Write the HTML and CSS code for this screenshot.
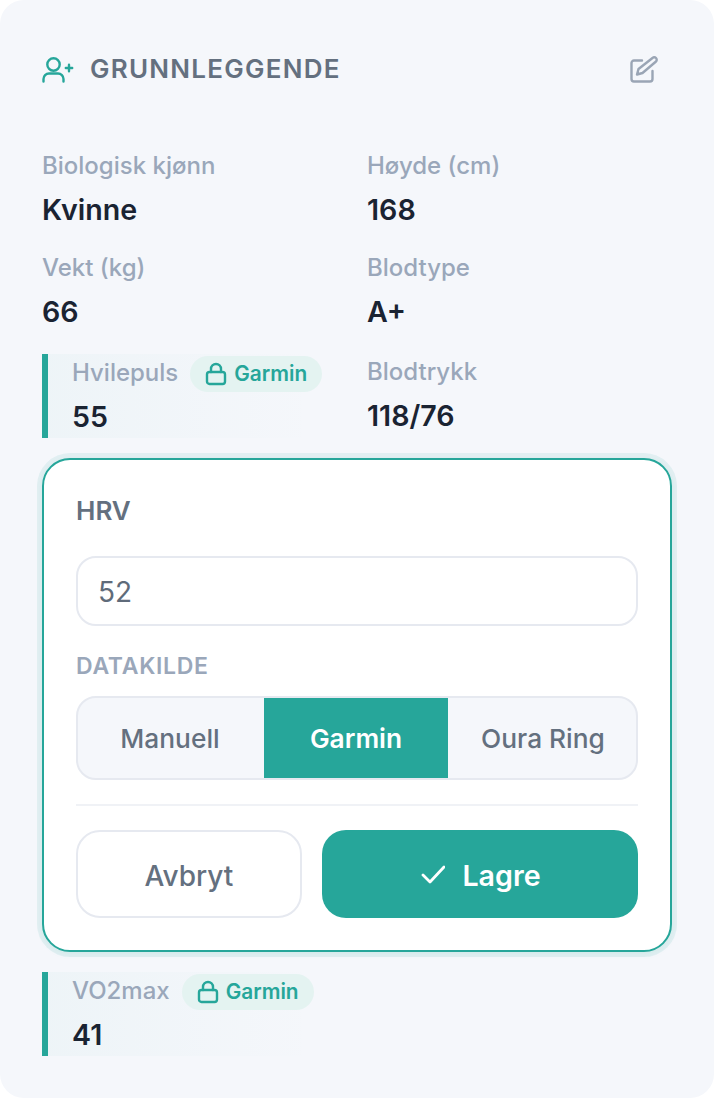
FILE: index.html
```html
<!DOCTYPE html>
<html lang="no">
<head>
<meta charset="utf-8">
<title>Grunnleggende</title>
<link rel="stylesheet" href="styles.css">
</head>
<body>
<div class="card">
  <div class="card-head">
    <div class="title">
      <svg class="title-icon" viewBox="0 0 32 28" fill="none" stroke="#26a69a" stroke-width="2.4" stroke-linecap="round" stroke-linejoin="round">
        <circle cx="11.500" cy="9.500" r="6.200"/>
        <path d="M1.500 26.500v-2.500a5.500 5.500 0 0 1 5.500-5.500h9a5.500 5.500 0 0 1 5.500 5.500v2.500"/>
        <path d="M27 9.800v6.400M23.800 13h6.400"/>
      </svg>
      <span class="title-text">GRUNNLEGGENDE</span>
    </div>
    <svg class="edit-icon" viewBox="0 0 28 28" fill="none" stroke="#9aa5b5" stroke-width="2.4" stroke-linecap="round" stroke-linejoin="round">
      <path d="M12 5.500H4A2.500 2.500 0 0 0 1.500 8v16A2.500 2.500 0 0 0 4 26.500h16a2.500 2.500 0 0 0 2.500-2.500v-8"/>
      <path d="M22.500 3a2.400 2.400 0 0 1 3.500 3.500L12.500 18 7 19.500l1.500-5.500z"/>
    </svg>
  </div>

  <div class="fields">
    <div class="field">
      <div class="label">Biologisk kjønn</div>
      <div class="value">Kvinne</div>
    </div>
    <div class="field">
      <div class="label">Høyde (cm)</div>
      <div class="value">168</div>
    </div>
    <div class="field row-two">
      <div class="label">Vekt (kg)</div>
      <div class="value">66</div>
    </div>
    <div class="field row-two">
      <div class="label">Blodtype</div>
      <div class="value">A+</div>
    </div>
    <div class="field synced">
      <div class="label">Hvilepuls
        <span class="badge">
          <svg viewBox="0 0 22 24" fill="none" stroke="#26a69a" stroke-width="2.4" stroke-linecap="round" stroke-linejoin="round"><rect x="2" y="10" width="18" height="12" rx="2.500"/><path d="M6 10V7a5 5 0 0 1 10 0v3"/></svg>
          Garmin
        </span>
      </div>
      <div class="value">55</div>
    </div>
    <div class="field">
      <div class="label">Blodtrykk</div>
      <div class="value">118/76</div>
    </div>

    <div class="editor">
      <div class="editor-label">HRV</div>
      <input class="editor-input" type="text" value="52">
      <div class="source-label">DATAKILDE</div>
      <div class="segments">
        <div class="segment seg-left">Manuell</div>
        <div class="segment active">Garmin</div>
        <div class="segment seg-right">Oura Ring</div>
      </div>
      <div class="actions">
        <button class="btn btn-cancel">Avbryt</button>
        <button class="btn btn-save">
          <svg viewBox="0 0 24 24" fill="none" stroke="#fff" stroke-width="2.800" stroke-linecap="round" stroke-linejoin="round"><path d="M2 13l7 7L23 5"/></svg>
          <span class="save-text">Lagre</span>
        </button>
      </div>
    </div>

    <div class="field synced">
      <div class="label">VO2max
        <span class="badge">
          <svg viewBox="0 0 22 24" fill="none" stroke="#26a69a" stroke-width="2.4" stroke-linecap="round" stroke-linejoin="round"><rect x="2" y="10" width="18" height="12" rx="2.500"/><path d="M6 10V7a5 5 0 0 1 10 0v3"/></svg>
          Garmin
        </span>
      </div>
      <div class="value">41</div>
    </div>
  </div>
</div>
</body>
</html>
```

FILE: styles.css
```css
html, body {
  margin: 0;
  padding: 0;
  background: #fff;
}

body {
  font-family: Inter, "Liberation Sans", sans-serif;
}

.card {
  box-sizing: border-box;
  width: 714px;
  height: 1098px;
  padding: 52px 42px 0 42px;
  background: #f5f7fb;
  border-radius: 24px;
}

.card-head {
  display: flex;
  justify-content: space-between;
  align-items: center;
  height: 34px;
  padding-right: 14px;
}

.title {
  display: flex;
  align-items: center;
  gap: 16px;
  font-size: 26px;
  font-weight: 600;
  letter-spacing: 1.25px;
  color: #64707f;
}

.title-text {
  padding-bottom: 2px;
}

.title-icon {
  width: 32px;
  height: 28px;
}

.edit-icon {
  width: 28px;
  height: 28px;
}

.fields {
  display: grid;
  grid-template-columns: 305px 305px;
  column-gap: 20px;
  margin-top: 61px;
}

.field {
  height: 84px;
  margin-bottom: 18px;
}

.row-two {
  margin-bottom: 20px;
}

.label {
  display: flex;
  align-items: center;
  gap: 12px;
  height: 36px;
  font-size: 24px;
  font-weight: 500;
  color: #9aa7ba;
}

.value {
  margin-top: 10px;
  font-size: 28.600px;
  line-height: 34px;
  font-weight: 600;
  color: #1a2332;
}

.synced {
  box-sizing: border-box;
  margin-top: 1px;
  margin-bottom: 20px;
  padding-left: 24px;
  border-left: 6px solid #26a69a;
  background: linear-gradient(90deg, rgba(38, 166, 154, 0.035), rgba(38, 166, 154, 0) 90%);
}

.badge {
  display: inline-flex;
  align-items: center;
  gap: 7px;
  height: 36px;
  margin-top: 3px;
  padding: 0 15px;
  border-radius: 18px;
  background: #e4f3f1;
  font-size: 20.800px;
  font-weight: 600;
  color: #26a69a;
}

.badge svg {
  width: 22px;
  height: 24px;
}

.editor {
  grid-column: 1 / 3;
  box-sizing: border-box;
  height: 494px;
  margin-bottom: 19px;
  padding: 36px 32px 0 32px;
  background: #fff;
  border: 2px solid #26a69a;
  border-radius: 28px;
  box-shadow: 0 0 0 5px rgba(38, 166, 154, 0.09), 0 2px 6px rgba(38, 166, 154, 0.08);
}

.editor-label {
  font-size: 26px;
  line-height: 30px;
  font-weight: 600;
  color: #64707f;
}

.editor-input {
  display: block;
  box-sizing: border-box;
  width: 100%;
  height: 70px;
  margin-top: 30px;
  padding: 2px 20px 0 20px;
  background: #fff;
  border: 2px solid #e6e9f0;
  border-radius: 20px;
  font-family: inherit;
  font-size: 28px;
  color: #5f6b7a;
}

.source-label {
  margin-top: 26px;
  font-size: 23px;
  line-height: 28px;
  font-weight: 600;
  letter-spacing: 0.7px;
  color: #9aa7ba;
}

.segments {
  display: grid;
  grid-template-columns: 186px 184px 1fr;
  box-sizing: border-box;
  height: 84px;
  margin-top: 16px;
  background: #f5f7fb;
  border: 2px solid #e6e9f0;
  border-radius: 20px;
  overflow: hidden;
}

.segment {
  display: flex;
  align-items: center;
  justify-content: center;
  font-size: 26.300px;
  font-weight: 500;
  color: #64707f;
}

.seg-left {
  padding-right: 2px;
}

.seg-right {
  padding-left: 2px;
}

.segment.active {
  background: #26a69a;
  font-weight: 600;
  color: #fff;
}

.actions {
  display: grid;
  grid-template-columns: 226px 316px;
  column-gap: 20px;
  margin-top: 24px;
  padding-top: 24px;
  border-top: 2px solid #f0f2f6;
}

.btn {
  display: flex;
  align-items: center;
  justify-content: center;
  gap: 17px;
  box-sizing: border-box;
  height: 88px;
  border-radius: 24px;
  font-family: inherit;
  font-size: 28px;
}

.btn-cancel {
  background: #fff;
  border: 2px solid #e6e9f0;
  padding-top: 4px;
  font-weight: 500;
  color: #64707f;
}

.btn-save {
  padding-left: 8px;
  background: #26a69a;
  border: none;
  font-size: 28.600px;
  font-weight: 600;
  color: #fff;
}

.save-text {
  padding-top: 2px;
}

.btn-save svg {
  width: 24px;
  height: 24px;
}
```
